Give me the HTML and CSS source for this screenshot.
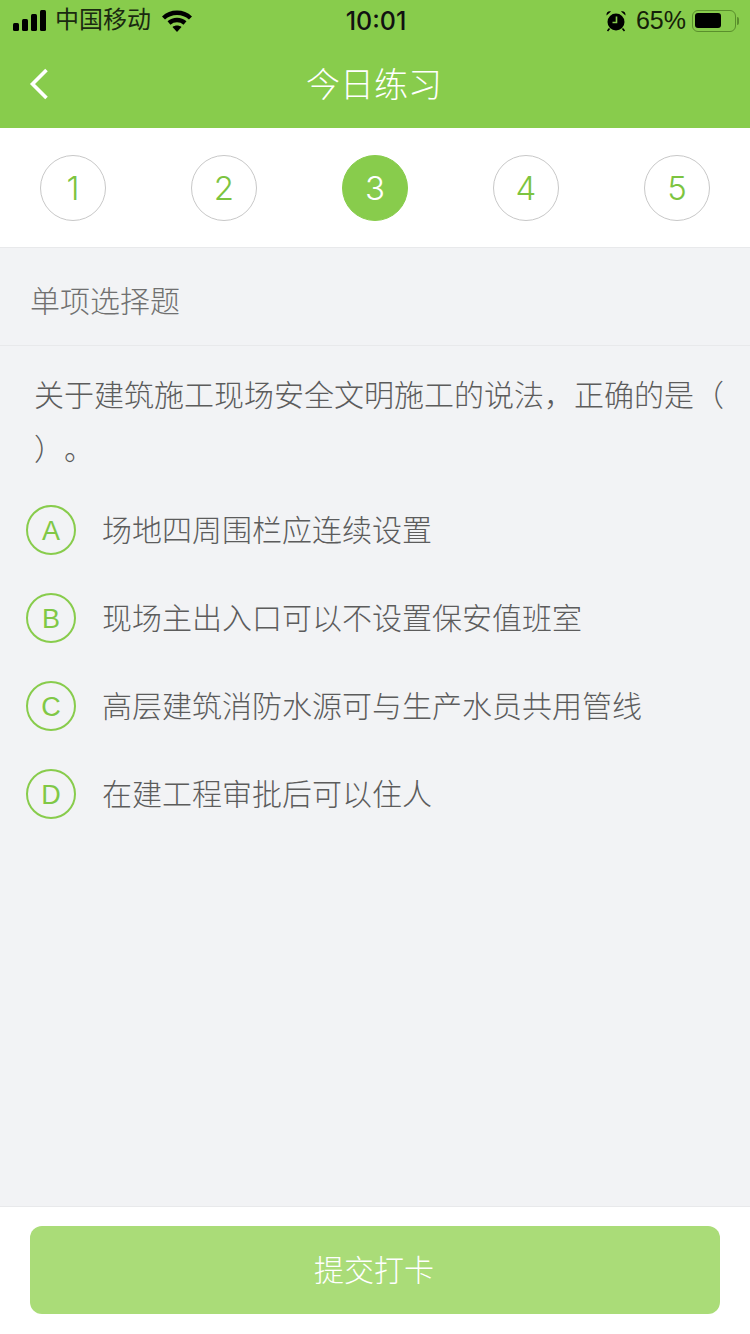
FILE: index.html
```html
<!DOCTYPE html>
<html lang="zh-CN">
<head>
    <meta charset="UTF-8">
    <meta name="viewport" content="width=device-width, initial-scale=1.0">
    <title>今日练习</title>
    <link rel="stylesheet" href="styles.css">
</head>
<body>
    <!-- Header -->
    <header class="header">
        <div class="status-bar">
            <div class="status-left">
                <svg class="signal" width="33" height="22" viewBox="0 0 33 22">
                    <rect x="0" y="13" width="6" height="8" rx="1.5"/>
                    <rect x="9" y="9" width="6" height="12" rx="1.5"/>
                    <rect x="18" y="4" width="6" height="17" rx="1.5"/>
                    <rect x="27" y="0" width="6" height="21" rx="1.5"/>
                </svg>
                <span class="carrier">中国移动</span>
                <svg class="wifi" width="30" height="22" viewBox="0 0 30 22">
                    <path d="M1.5 8C9 1 21 1 28.5 8" fill="none" stroke="#000" stroke-width="4.4"/>
                    <path d="M7 13C11.5 9 18.5 9 23 13" fill="none" stroke="#000" stroke-width="4.4"/>
                    <path d="M10.5 17C13 15 17 15 19.5 17L15 22Z"/>
                </svg>
            </div>
            <div class="status-time">10:01</div>
            <div class="status-right">
                <svg class="alarm" width="20" height="22" viewBox="0 0 20 22">
                    <circle cx="10" cy="12" r="8.5"/>
                    <path d="M0.5 5.5L5 1.5C3 0.5 0 2 0.5 5.5ZM19.5 5.5L15 1.5C17 0.5 20 2 19.5 5.5Z"/>
                    <path d="M3.5 18.5L1.5 21M16.5 18.5L18.5 21" stroke="#000" stroke-width="1.6"/>
                    <path d="M10.5 6.5V12.5H6.5" fill="none" stroke="#88cc4c" stroke-width="1.6"/>
                </svg>
                <span class="battery-text">65%</span>
                <div class="battery">
                    <div class="battery-level"></div>
                </div>
                <div class="battery-cap"></div>
            </div>
        </div>
        <div class="nav-bar">
            <svg class="back" width="22" height="34" viewBox="0 0 22 34">
                <path d="M18.5 3L4.5 17L18.5 31" fill="none" stroke="#fff" stroke-width="3.6"/>
            </svg>
            <h1 class="nav-title">今日练习</h1>
        </div>
    </header>

    <!-- Question numbers -->
    <nav class="steps">
        <div class="step">1</div>
        <div class="step">2</div>
        <div class="step step-active">3</div>
        <div class="step">4</div>
        <div class="step">5</div>
    </nav>

    <main class="content">
        <div class="section-title">单项选择题</div>
        <p class="question">关于建筑施工现场安全文明施工的说法，正确的是（ ）。</p>
        <ul class="options">
            <li class="option"><span class="option-key">A</span><span class="option-text">场地四周围栏应连续设置</span></li>
            <li class="option"><span class="option-key">B</span><span class="option-text">现场主出入口可以不设置保安值班室</span></li>
            <li class="option"><span class="option-key">C</span><span class="option-text">高层建筑消防水源可与生产水员共用管线</span></li>
            <li class="option"><span class="option-key">D</span><span class="option-text">在建工程审批后可以住人</span></li>
        </ul>
    </main>

    <!-- Submit -->
    <footer class="footer">
        <button class="submit">提交打卡</button>
    </footer>
</body>
</html>
```

FILE: styles.css
```css
/* Main Page Styling */
* {
    box-sizing: border-box;
}

body {
    width: 750px;
    height: 1334px;
    margin: 0;
    display: flex;
    flex-direction: column;
    overflow: hidden;
    background-color: #f2f3f5;
    font-family: 'Liberation Sans', 'Noto Sans CJK SC', sans-serif;
    text-spacing-trim: space-all;
}

/* Header */
.header {
    height: 128px;
    background-color: #88cc4c;
}

.status-bar {
    height: 40px;
    display: grid;
    grid-template-columns: 1fr auto 1fr;
    align-items: center;
    padding: 0 11px 0 13px;
    color: #000;
}

.status-left {
    display: flex;
    align-items: center;
}

.signal {
    margin-right: 9px;
}

.carrier {
    padding-bottom: 1px;
    font-size: 24px;
    line-height: 40px;
    color: #1a2a10;
}

.wifi {
    margin-left: 11px;
}

.status-time {
    font-family: 'Inter', 'Liberation Sans', sans-serif;
    font-size: 25px;
    font-weight: 500;
    color: #111;
}

.status-right {
    display: flex;
    align-items: center;
    justify-content: flex-end;
}

.alarm {
    margin-right: 10px;
}

.battery-text {
    font-size: 25px;
    color: #142008;
    margin-right: 6px;
}

.battery {
    width: 44px;
    height: 22px;
    padding: 2px;
    border: 1.5px solid #5a8f2c;
    border-radius: 6px;
}

.battery-level {
    width: 26px;
    height: 15px;
    border-radius: 3px;
    background-color: #000;
}

.battery-cap {
    width: 2px;
    height: 8px;
    margin-left: 1px;
    border-radius: 0 2px 2px 0;
    background-color: #5a8f2c;
}

.nav-bar {
    height: 88px;
    display: flex;
    align-items: center;
    justify-content: center;
    position: relative;
}

.back {
    position: absolute;
    left: 28px;
    top: 27px;
}

.nav-title {
    margin: 0 2px 0 0;
    padding-bottom: 3px;
    font-size: 34px;
    font-weight: 300;
    color: #fff;
}

/* Question numbers */
.steps {
    height: 120px;
    display: flex;
    justify-content: space-between;
    padding: 27px 40px 0;
    background-color: #fff;
    border-bottom: 1px solid #e8e9eb;
}

.step {
    width: 66px;
    height: 66px;
    display: flex;
    align-items: center;
    justify-content: center;
    border: 1px solid #c8c8c8;
    border-radius: 50%;
    font-family: 'Inter', 'Liberation Sans', sans-serif;
    font-size: 33px;
    font-weight: 300;
    color: #7cc440;
}

.step-active {
    border-color: #88cc4c;
    background-color: #88cc4c;
    color: #fff;
}

/* Question */
.content {
    flex: 1;
}

.section-title {
    height: 98px;
    display: flex;
    align-items: center;
    padding: 4px 0 0 30px;
    border-bottom: 1px solid #e8e9eb;
    font-size: 30px;
    font-weight: 300;
    color: #707070;
}

.question {
    margin: 23px 0 0;
    padding: 0 20px 0 34px;
    font-size: 30px;
    font-weight: 300;
    line-height: 54px;
    color: #5c5c5c;
}

.options {
    list-style: none;
    margin: 9px 0 0;
    padding: 0 0 0 26px;
}

.option {
    height: 88px;
    display: flex;
    align-items: center;
}

.option-key {
    width: 50px;
    height: 50px;
    display: flex;
    align-items: center;
    justify-content: center;
    margin-right: 26px;
    padding-top: 2px;
    border: 2px solid #88cc4c;
    border-radius: 50%;
    font-size: 27px;
    color: #80c846;
}

.option-text {
    padding-bottom: 4px;
    font-size: 30px;
    font-weight: 300;
    color: #5c5c5c;
}

/* Submit */
.footer {
    height: 128px;
    padding: 19px 30px 0;
    background-color: #fff;
    border-top: 1px solid #e8e9eb;
}

.submit {
    width: 690px;
    height: 88px;
    padding: 0 2px 4px 0;
    border: 0;
    border-radius: 12px;
    background-color: #aadc78;
    font-family: inherit;
    font-size: 30px;
    font-weight: 300;
    color: #fff;
}
```
